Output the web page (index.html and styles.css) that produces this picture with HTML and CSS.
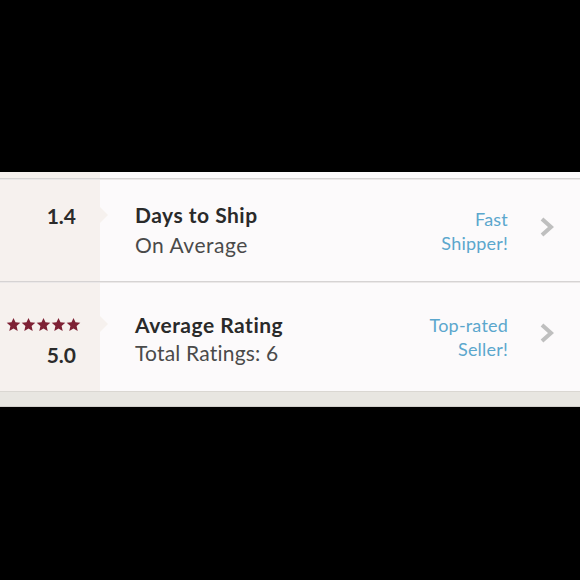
FILE: index.html
```html
<!DOCTYPE html>
<html lang="en">
<head>
  <meta charset="UTF-8" />
  <meta name="viewport" content="width=device-width, initial-scale=1.0"/>
  <title>Seller Stats</title>
  <link rel="stylesheet" href="styles.css">
</head>
<body>
  <div class="panel">
    <div class="lip"><div class="lip-side"></div></div>

    <div class="stat stat-ship">
      <div class="stat-side">
        <span class="stat-value">1.4</span>
      </div>
      <div class="stat-info">
        <div class="stat-title">Days to Ship</div>
        <div class="stat-sub">On Average</div>
      </div>
      <div class="stat-badge">Fast<br>Shipper!</div>
      <svg class="chevron" viewBox="0 0 14 20" width="14" height="20">
        <polyline points="2,2 11,10 2,18" />
      </svg>
    </div>

    <div class="stat stat-rating">
      <div class="stat-side">
        <svg class="stars" viewBox="0 0 75 14" width="75" height="14">
          <defs>
            <polygon id="star" points="6.5,0 8.5,4.3 13.3,4.8 9.6,8.1 10.7,13 6.5,10.5 2.3,13 3.4,8.1 -0.3,4.8 4.5,4.3" />
          </defs>
          <use href="#star" x="1" />
          <use href="#star" x="16" />
          <use href="#star" x="31" />
          <use href="#star" x="46" />
          <use href="#star" x="61" />
        </svg>
        <span class="stat-value">5.0</span>
      </div>
      <div class="stat-info">
        <div class="stat-title">Average Rating</div>
        <div class="stat-sub">Total Ratings: 6</div>
      </div>
      <div class="stat-badge">Top-rated<br>Seller!</div>
      <svg class="chevron" viewBox="0 0 14 20" width="14" height="20">
        <polyline points="2,2 11,10 2,18" />
      </svg>
    </div>
  </div>
  <div class="ledge"></div>
</body>
</html>
```

FILE: styles.css
```css
body {
  margin: 0;
  padding-top: 172px;
  background: #000;
  font-family: Lato, "Open Sans", sans-serif;
  height: 580px;
  box-sizing: border-box;
}
.panel {
  background: #fcfafb;
}
.lip {
  height: 6px;
  border-bottom: 1px solid #d6d3d3;
  box-shadow: 0 1px 0 #ebe8e8;
}
.lip-side {
  width: 100px;
  height: 100%;
  background: #f6f1ee;
}
.stat {
  display: flex;
  border-bottom: 1px solid #d6d3d3;
  box-shadow: 0 1px 0 #ebe8e8;
  margin-bottom: 1px;
}
.stat-ship {
  height: 101px;
  margin-top: 1px;
}
.stat-rating {
  height: 108px;
  border-bottom: none;
  box-shadow: none;
  margin-bottom: 0;
}
.stat-side {
  position: relative;
  width: 100px;
  flex-shrink: 0;
  background: #f6f1ee;
  display: flex;
  flex-direction: column;
  align-items: flex-end;
  padding-right: 24px;
  box-sizing: border-box;
}
.stat-side::after {
  content: "";
  position: absolute;
  left: 100%;
  top: 27px;
  border-left: 8px solid #f6f1ee;
  border-top: 8px solid transparent;
  border-bottom: 8px solid transparent;
}
.stat-ship .stat-side {
  padding-top: 21px;
}
.stat-rating .stat-side {
  padding-top: 35px;
}
.stat-rating .stat-side::after {
  top: 33px;
}
.stat-value {
  font-size: 21px;
  font-weight: 700;
  line-height: 29px;
  color: #2b2b2b;
}
.stars {
  display: block;
  margin-right: -5px;
  margin-bottom: 8px;
  fill: #7e2135;
}
.stat-info {
  flex: 1;
  padding-left: 35px;
  letter-spacing: 0.5px;
}
.stat-ship .stat-info {
  padding-top: 20px;
}
.stat-rating .stat-info {
  padding-top: 28px;
}
.stat-title {
  font-size: 21px;
  font-weight: 700;
  line-height: 30px;
  color: #2a2a2a;
}
.stat-sub {
  font-size: 21px;
  line-height: 30px;
  color: #4a4a4a;
}
.stat-rating .stat-title,
.stat-rating .stat-sub {
  line-height: 28px;
}
.stat-rating .stat-sub {
  letter-spacing: 0.2px;
}
.stat-badge {
  align-self: center;
  text-align: right;
  font-size: 18px;
  line-height: 24px;
  letter-spacing: 0.2px;
  color: #5ba7cd;
}
.chevron {
  align-self: center;
  margin: 0 26px 8px 32px;
  fill: none;
  stroke: #bfbfbf;
  stroke-width: 4;
}
.ledge {
  height: 14px;
  background: #e8e6e1;
  border-top: 1px solid #dad7d2;
  border-bottom: 1px solid #d2cfca;
}
```
